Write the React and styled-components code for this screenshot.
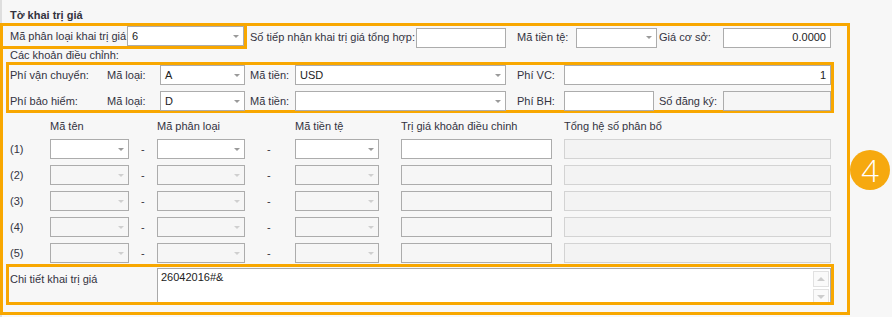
import React from "react";
import styled, { createGlobalStyle } from "styled-components";

const ORANGE = "#f8a700";

const GlobalStyle = createGlobalStyle`
  body {
    margin: 0;
    background: #f7f7f7;
    font-family: "Liberation Sans", "Noto Sans", sans-serif;
    font-size: 11px;
    color: #33333f;
  }
`;

const Page = styled.div`
  width: 892px;
  height: 317px;
  overflow: hidden;
  box-shadow: inset 2px 0 0 #dedede;
`;

const Title = styled.div`
  height: 23px;
  padding-left: 10px;
  box-sizing: border-box;
  display: flex;
  align-items: flex-end;
  padding-bottom: 1px;
  font-weight: bold;
  line-height: 13px;
`;

const Body = styled.div`
  display: flex;
  align-items: flex-start;
`;

const Panel = styled.div`
  width: 850px;
  height: 292px;
  box-sizing: border-box;
  border: 3px solid ${ORANGE};
  display: flex;
  flex-direction: column;
`;

const TopRow = styled.div`
  height: 23px;
  display: flex;
  align-items: center;
`;

const TypeBox = styled.div`
  width: 244px;
  align-self: stretch;
  box-sizing: border-box;
  border-right: 3px solid ${ORANGE};
  border-bottom: 3px solid ${ORANGE};
  padding-left: 7px;
  display: flex;
  align-items: center;
`;

const Label = styled.div`
  width: ${(p) => p.$w}px;
  padding-left: ${(p) => p.$pl || 0}px;
  box-sizing: border-box;
  flex: none;
  white-space: nowrap;
  line-height: 13px;
`;

const Field = styled.div`
  width: ${(p) => (p.$w ? `${p.$w}px` : "auto")};
  flex: ${(p) => (p.$w ? "none" : "1")};
  height: 20px;
  box-sizing: border-box;
  border: 1px solid ${(p) => (p.$soft ? "#d3d3d3" : "#acacac")};
  background: ${(p) => (p.$off ? (p.$soft ? "#f3f3f3" : "#f6f6f6") : "#fff")};
  display: flex;
  align-items: center;
  justify-content: ${(p) => (p.$right ? "flex-end" : "flex-start")};
  padding: 0 4px 0 4px;
  line-height: 13px;
  color: #222;
`;

const Value = styled.span`
  flex: 1;
`;

const Arrow = styled.span`
  width: 0;
  height: 0;
  border-left: 3px solid transparent;
  border-right: 3px solid transparent;
  border-top: 3px solid ${(p) => (p.$off ? "#cfcfcf" : "#9a9a9a")};
`;

const SubTitle = styled.div`
  height: 13px;
  line-height: 13px;
  padding-left: 7px;
`;

const FeeBox = styled.div`
  margin-left: 3px;
  width: 828px;
  height: 51px;
  box-sizing: border-box;
  border: 3px solid ${ORANGE};
  display: flex;
  flex-direction: column;
  gap: 6px;
`;

const FeeRow = styled.div`
  height: 20px;
  display: flex;
  align-items: center;
`;

const Grid = styled.div`
  padding-left: 7px;
  display: grid;
  grid-template-columns: 40px 79px 28px 88px 50px 84px 22px 151px 12px 267px;
  grid-template-rows: repeat(6, 20px);
  row-gap: 6px;
  align-items: center;
`;

const Head = styled.div`
  grid-column: ${(p) => p.$col};
  align-self: end;
  line-height: 13px;
  white-space: nowrap;
`;

const Cell = styled.div`
  grid-column: ${(p) => p.$col};
  line-height: 13px;
  padding-left: ${(p) => p.$pl || 0}px;
`;

const DetailBox = styled.div`
  margin-top: 1px;
  margin-left: 3px;
  width: 828px;
  height: 41px;
  box-sizing: border-box;
  border: 3px solid ${ORANGE};
  overflow: hidden;
  display: flex;
`;

const DetailLabel = styled.div`
  width: 148px;
  padding: 6px 0 0 1px;
  box-sizing: border-box;
  line-height: 13px;
`;

const Memo = styled.div`
  flex: 1;
  margin-top: 1px;
  height: 44px;
  box-sizing: border-box;
  border: 1px solid #a9a9a9;
  background: #fff;
  display: flex;
`;

const MemoText = styled.div`
  flex: 1;
  padding: 2px 3px;
  line-height: 13px;
  color: #222;
`;

const ScrollCol = styled.div`
  width: 16px;
  margin-right: 1px;
  padding-top: 2px;
  display: flex;
  flex-direction: column;
  gap: 2px;
`;

const ScrollBtn = styled.div`
  height: 16px;
  box-sizing: border-box;
  border: 1px solid #e1e1e1;
  background: #fafafa;
  display: flex;
  align-items: center;
  justify-content: center;
`;

const ScrollArrow = styled.span`
  width: 0;
  height: 0;
  border-left: 4px solid transparent;
  border-right: 4px solid transparent;
  ${(p) =>
    p.$up
      ? "border-bottom: 4px solid #cdcdcd;"
      : "border-top: 4px solid #cdcdcd;"}
`;

const Badge = styled.div`
  margin-top: 127px;
  width: 40px;
  height: 40px;
  border-radius: 50%;
  background: #f6a90f;
  color: #fff;
  font-family: "Open Sans", "Noto Sans", sans-serif;
  font-size: 31px;
  font-weight: 300;
  display: flex;
  align-items: center;
  justify-content: center;
  line-height: 1;
`;

const Combo = ({ w, value, off }) => (
  <Field $w={w} $off={off}>
    <Value>{value}</Value>
    <Arrow $off={off} />
  </Field>
);

const rows = [1, 2, 3, 4, 5];

export default function App() {
  return (
    <Page>
      <GlobalStyle />
      <Title>Tờ khai trị giá</Title>
      <Body>
        <Panel>
          <TopRow>
            <TypeBox>
              <Label $w={117}>Mã phân loại khai trị giá:</Label>
              <Combo w={117} value="6" />
            </TypeBox>
            <Label $w={169} $pl={3}>Số tiếp nhận khai trị giá tổng hợp:</Label>
            <Field $w={90} />
            <Label $w={70} $pl={11}>Mã tiền tệ:</Label>
            <Combo w={81} />
            <Label $w={66} $pl={2}>Giá cơ sở:</Label>
            <Field $w={108} $right>0.0000</Field>
          </TopRow>
          <SubTitle>Các khoản điều chỉnh:</SubTitle>
          <FeeBox>
            <FeeRow>
              <Label $w={98} $pl={1}>Phí vận chuyển:</Label>
              <Label $w={53}>Mã loại:</Label>
              <Combo w={85} value="A" />
              <Label $w={50} $pl={5}>Mã tiền:</Label>
              <Combo w={211} value="USD" />
              <Label $w={58} $pl={11}>Phí VC:</Label>
              <Field $right>1</Field>
            </FeeRow>
            <FeeRow>
              <Label $w={98} $pl={1}>Phí bảo hiểm:</Label>
              <Label $w={53}>Mã loại:</Label>
              <Combo w={85} value="D" />
              <Label $w={50} $pl={5}>Mã tiền:</Label>
              <Combo w={211} />
              <Label $w={58} $pl={11}>Phí BH:</Label>
              <Field $w={90} />
              <Label $w={69} $pl={5}>Số đăng ký:</Label>
              <Field $off />
            </FeeRow>
          </FeeBox>
          <Grid>
            <Head $col={2}>Mã tên</Head>
            <Head $col={4}>Mã phân loại</Head>
            <Head $col={6}>Mã tiền tệ</Head>
            <Head $col={8}>Trị giá khoản điều chinh</Head>
            <Head $col={10}>Tổng hệ số phân bổ</Head>
            {rows.map((n) => {
              const off = n > 1;
              return (
                <React.Fragment key={n}>
                  <Cell $col={1}>({n})</Cell>
                  <Cell $col={2}>
                    <Combo w={79} off={off} />
                  </Cell>
                  <Cell $col={3} $pl={12}>-</Cell>
                  <Cell $col={4}>
                    <Combo w={88} off={off} />
                  </Cell>
                  <Cell $col={5} $pl={22}>-</Cell>
                  <Cell $col={6}>
                    <Combo w={84} off={off} />
                  </Cell>
                  <Cell $col={8}>
                    <Field $w={151} $off={off} />
                  </Cell>
                  <Cell $col={10}>
                    <Field $w={267} $off $soft />
                  </Cell>
                </React.Fragment>
              );
            })}
          </Grid>
          <DetailBox>
            <DetailLabel>Chi tiết khai trị giá</DetailLabel>
            <Memo>
              <MemoText>26042016#&amp;</MemoText>
              <ScrollCol>
                <ScrollBtn>
                  <ScrollArrow $up />
                </ScrollBtn>
                <ScrollBtn>
                  <ScrollArrow />
                </ScrollBtn>
              </ScrollCol>
            </Memo>
          </DetailBox>
        </Panel>
        <Badge>4</Badge>
      </Body>
    </Page>
  );
}
